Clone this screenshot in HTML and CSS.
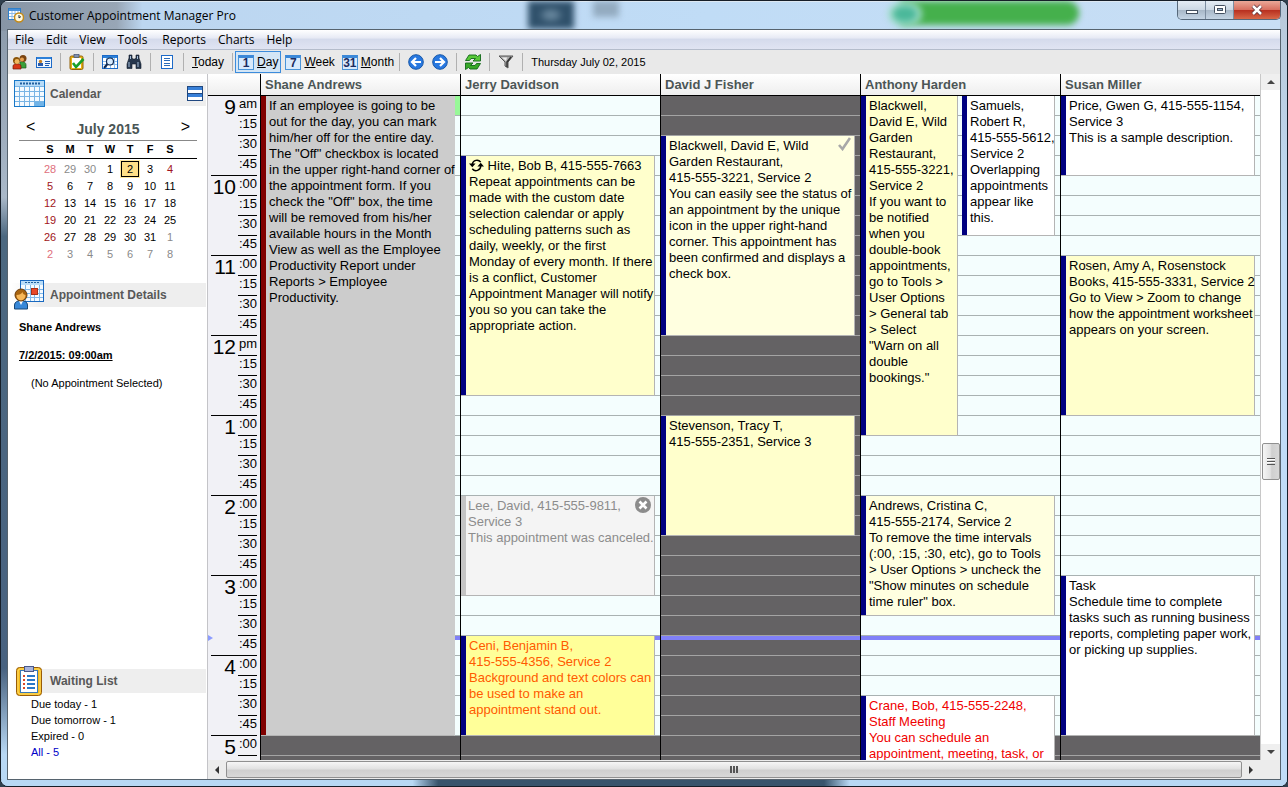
FILE: index.html
```html
<!DOCTYPE html>
<html lang="en">
<head>
  <meta charset="UTF-8" />
  <title>Customer Appointment Manager Pro</title>
  <link rel="stylesheet" href="styles.css">
</head>
<body>
  <div class="window">
    <div class="glass"><i class="blob dark"></i><i class="blob gray"></i><i class="blob green"></i><i class="blob ring"></i></div>

    <header class="titlebar">
      <svg class="app-icon" width="16" height="16" viewBox="0 0 16 16">
        <rect x="0.5" y="1.5" width="12" height="11" fill="#fff" stroke="#2f7fc8"/>
        <path d="M1 3h11M4 4v8M7 4v8M10 4v8M1 6.5h11M1 9.5h11" stroke="#8cbcec" fill="none"/>
        <rect x="1" y="2" width="11" height="2" fill="#4a90d8"/>
        <circle cx="11" cy="10.5" r="4.5" fill="#fff8dc" stroke="#c48a18" stroke-width="1.5"/>
        <path d="M11 8v3l2-1.500" stroke="#234" fill="none"/>
      </svg>
      <span class="title">Customer Appointment Manager Pro</span>
      <div class="controls">
        <button class="ctl" aria-label="Minimize"><svg width="14" height="12" viewBox="0 0 14 12"><rect x="1.500" y="6.500" width="11" height="3" fill="#fff" stroke="#445060"/></svg></button>
        <button class="ctl" aria-label="Maximize"><svg width="12" height="12" viewBox="0 0 12 12"><rect x="0.500" y="1.500" width="11" height="8" rx="1" fill="#fff" stroke="#445060"/><rect x="3.500" y="4.500" width="5" height="2" fill="#9fb8d0" stroke="#445060"/></svg></button>
        <button class="ctl close" aria-label="Close"><svg width="12" height="12" viewBox="0 0 12 12"><path d="M2 2l8 8M10 2l-8 8" stroke="#5a3038" stroke-width="4"/><path d="M2 2l8 8M10 2l-8 8" stroke="#fff" stroke-width="2.500"/></svg></button>
      </div>
    </header>

    <div class="client">
      <nav class="menubar">
        <button>File</button><button>Edit</button><button>View</button><button>Tools</button><button class="wide">Reports</button><button>Charts</button><button>Help</button>
      </nav>

      <div class="toolbar">
        <button aria-label="Customers"><svg width="16" height="16" viewBox="0 0 16 16">
          <path d="M8 8c3-1 6 0 6 3v3H8z" fill="#3aa03a" stroke="#1c5a1c" stroke-width=".7"/>
          <circle cx="11" cy="4.500" r="3.500" fill="#7a4410"/><circle cx="10" cy="5.500" r="2" fill="#e8a050"/>
          <path d="M1 15v-3c0-3 8-3 8 0v3z" fill="#d83818" stroke="#701808" stroke-width=".7"/>
          <circle cx="4.500" cy="6.500" r="3.500" fill="#8a5408"/><circle cx="5" cy="7.500" r="2.400" fill="#f0b860"/>
        </svg></button>
        <button aria-label="Contact card"><svg width="16" height="16" viewBox="0 0 16 16">
          <rect x="0.500" y="3.500" width="15" height="10" fill="#eef6ff" stroke="#1c6ac8"/><rect x="1" y="3" width="14" height="2" fill="#2c80d8"/>
          <circle cx="4.500" cy="7.500" r="1.700" fill="#c88020"/><rect x="2" y="9" width="5" height="3" fill="#2858a8"/>
          <path d="M9 7.500h5M9 9.500h5M9 11.500h4" stroke="#1c5ab0"/>
        </svg></button>
        <span class="sep"></span>
        <button aria-label="Waiting list"><svg width="16" height="16" viewBox="0 0 16 16">
          <rect x="1" y="2" width="13" height="13.500" rx="1.500" fill="#e8b010" stroke="#906008"/>
          <rect x="3" y="4" width="9" height="10" fill="#fff"/><rect x="5" y="0.500" width="5" height="3" fill="#8090b0" stroke="#405070" stroke-width=".7"/>
          <path d="M4 9l3 4 7.500-8" fill="none" stroke="#18a028" stroke-width="2.600"/>
        </svg></button>
        <span class="sep"></span>
        <button aria-label="Find appointment"><svg width="16" height="16" viewBox="0 0 16 16">
          <rect x="0.500" y="1.500" width="15" height="13" fill="#fff" stroke="#1c6ac8"/><rect x="1" y="2" width="14" height="2" fill="#2c80d8"/>
          <path d="M1 7.500h14M1 10.500h14M4.500 4v10M8.500 4v10M12.500 4v10" stroke="#90c0f0"/>
          <path d="M5.500 10L2 14" stroke="#102850" stroke-width="2"/><circle cx="8" cy="7.500" r="3.500" fill="#d8ecff" stroke="#102850" stroke-width="1.200"/>
        </svg></button>
        <button aria-label="Search"><svg width="16" height="16" viewBox="0 0 16 16">
          <path d="M3 1h3v3l1 1h2l1-1V1h3v3l2 6v4.500h-5V10H6v4.500H1V10l2-6z" fill="#26364c" stroke="#101c2c" stroke-width=".6"/>
          <path d="M3 8v5M12 8v5M4.500 2v3M11.500 2v3" stroke="#a8c0dc"/>
        </svg></button>
        <span class="sep"></span>
        <button aria-label="List"><svg width="16" height="16" viewBox="0 0 16 16">
          <rect x="2.500" y="1.500" width="11" height="13" fill="#fff" stroke="#1c6ac8"/><path d="M5 4.500h6M5 6.500h6M5 9.500h6M5 11.500h6" stroke="#2c6cb8"/>
        </svg></button>
        <span class="sep"></span>
        <button class="today-btn"><u>T</u>oday</button>
        <span class="sep"></span>
        <div class="views">
          <button class="view active"><span class="num">1</span><span><u>D</u>ay</span></button>
          <button class="view"><span class="num">7</span><span><u>W</u>eek</span></button>
          <button class="view"><span class="num">31</span><span><u>M</u>onth</span></button>
        </div>
        <span class="sep"></span>
        <button aria-label="Previous"><svg width="16" height="16" viewBox="0 0 16 16"><circle cx="8" cy="8" r="7.300" fill="#2878e0" stroke="#1858a8"/><path d="M13 8H4M8 4L4 8l4 4" fill="none" stroke="#fff" stroke-width="2.200"/></svg></button>
        <button aria-label="Next"><svg width="16" height="16" viewBox="0 0 16 16"><circle cx="8" cy="8" r="7.300" fill="#2878e0" stroke="#1858a8"/><path d="M3 8h9M8 4l4 4-4 4" fill="none" stroke="#fff" stroke-width="2.200"/></svg></button>
        <span class="sep"></span>
        <button aria-label="Refresh"><svg width="16" height="16" viewBox="0 0 16 16">
          <path d="M0.500 6.500L4 1h7l1.500 1.500L15.500 0.500V7H8l2.500-2.500H6L4.500 6.500z" fill="#58c838" stroke="#106818" stroke-width=".9"/>
          <path d="M15.500 9.500L12 15H5l-1.500-1.500L0.500 15.500V9H8l-2.500 2.500H10l1.500-2z" fill="#38a828" stroke="#106818" stroke-width=".9"/>
        </svg></button>
        <span class="sep"></span>
        <button aria-label="Filter"><svg width="16" height="16" viewBox="0 0 16 16"><path d="M1 2h14L10 8v6l-3-2V8z" fill="#aaa" stroke="#555"/><path d="M4 3.500h5L8 7z" fill="#eee"/><path d="M13 3L9 8v5" stroke="#333" stroke-width="1.500" fill="none"/></svg></button>
        <span class="sep"></span>
        <span class="date">Thursday July 02, 2015</span>
      </div>

      <div class="content">
        <aside class="sidebar">
          <section>
            <h2 class="band">
              <svg width="32" height="28" viewBox="0 0 32 28">
                <rect x="0.500" y="0.500" width="30" height="26" fill="#f4faff" stroke="#1878c8"/><rect x="1" y="1" width="29" height="5" fill="#b8dcf8"/>
                <path d="M6 3.500h20" stroke="#2060a0" stroke-width="2" stroke-dasharray="2 1"/>
                <rect x="21" y="21" width="9" height="5" fill="#70b4e8"/>
                <path d="M1 6.500h29M1 11.500h29M1 16.500h29M1 21.500h29M5.500 7v19M10.500 7v19M15.500 7v19M20.500 7v19M25.500 7v19" stroke="#78b4e4"/>
              </svg>
              Calendar
              <button class="collapse" aria-label="Collapse"><svg width="16" height="16" viewBox="0 0 16 16"><rect x="0.500" y="0.500" width="15" height="7" fill="#fff" stroke="#204880"/><rect x="0.500" y="7.500" width="15" height="7" fill="#fff" stroke="#204880"/><path d="M1 2.500h14M1 9.500h14" stroke="#3880d8" stroke-width="3"/></svg></button>
            </h2>
            <div class="month"><button>&lt;</button><strong>July 2015</strong><button>&gt;</button></div>
            <table class="cal">
              <thead><tr><th>S</th><th>M</th><th>T</th><th>W</th><th>T</th><th>F</th><th>S</th></tr></thead>
              <tbody>
                <tr><td class="other sun">28</td><td class="other">29</td><td class="other">30</td><td>1</td><td><span class="picked">2</span></td><td>3</td><td class="sun">4</td></tr>
                <tr><td class="sun">5</td><td>6</td><td>7</td><td>8</td><td>9</td><td>10</td><td>11</td></tr>
                <tr><td class="sun">12</td><td>13</td><td>14</td><td>15</td><td>16</td><td>17</td><td>18</td></tr>
                <tr><td class="sun">19</td><td>20</td><td>21</td><td>22</td><td>23</td><td>24</td><td>25</td></tr>
                <tr><td class="sun">26</td><td>27</td><td>28</td><td>29</td><td>30</td><td>31</td><td class="other">1</td></tr>
                <tr><td class="other sun">2</td><td class="other">3</td><td class="other">4</td><td class="other">5</td><td class="other">6</td><td class="other">7</td><td class="other">8</td></tr>
              </tbody>
            </table>
          </section>

          <section class="details">
            <h2 class="band">
              <svg width="32" height="30" viewBox="0 0 32 30">
                <rect x="6.500" y="0.500" width="23" height="21" fill="#f4faff" stroke="#1868c0"/><rect x="7" y="1" width="22" height="4" fill="#b8dcf8"/>
                <path d="M11 2.500h15" stroke="#2060a0" stroke-dasharray="2 1"/>
                <path d="M7 9.500h22M7 13.500h22M7 17.500h22M11.500 5v16M16.500 5v16M20.500 5v16M25.500 5v16" stroke="#80b8e8"/>
                <rect x="17.500" y="8.500" width="6" height="6" fill="#e84828" stroke="#a83018"/>
                <path d="M0.500 29v-4c0-6 13-6 13 0v4z" fill="#3888d8" stroke="#184878"/>
                <path d="M5 21l2 4 2-4z" fill="#fff"/>
                <circle cx="7" cy="15" r="6" fill="#a86410" stroke="#6c3c08"/><path d="M2.500 15c3 0 5-1 6-3 0 2 2 3 3 3 0 7-9 7-9 0z" fill="#f8b858"/>
              </svg>
              Appointment Details
            </h2>
            <p><b>Shane Andrews</b></p>
            <p><b><u>7/2/2015: 09:00am</u></b></p>
            <p class="none">(No Appointment Selected)</p>
          </section>

          <section class="waiting">
            <h2 class="band">
              <svg width="32" height="30" viewBox="0 0 32 30">
                <rect x="2.500" y="1.500" width="25" height="28" rx="3" fill="#f4b818" stroke="#985c08"/><rect x="4" y="3" width="22" height="25" rx="2" fill="none" stroke="#ffe070"/>
                <rect x="6.500" y="4.500" width="17" height="22" fill="#fff" stroke="#3878b8"/>
                <rect x="10.500" y="0.500" width="9" height="5" fill="#a8b4dc" stroke="#485888"/>
                <path d="M13 10h8M13 14h8M13 18h8M13 22h8" stroke="#2878c8" stroke-width="2"/>
                <path d="M9 10h2M9 14h2M9 18h2M9 22h2" stroke="#d84828" stroke-width="2"/>
              </svg>
              Waiting List
            </h2>
            <ul><li>Due today - 1</li><li>Due tomorrow - 1</li><li>Expired - 0</li><li><a href="#">All - 5</a></li></ul>
          </section>
        </aside>

        <main class="scheduler">
          <div class="heads">
            <span class="corner"></span>
            <h3>Shane Andrews</h3><h3>Jerry Davidson</h3><h3>David J Fisher</h3><h3>Anthony Harden</h3><h3>Susan Miller</h3>
          </div>

          <div class="sheet">
            <div class="ruler">
              <i class="now-mark"></i>
              <div class="hour"><b>9</b><ol><li>am</li><li>:15</li><li>:30</li><li>:45</li></ol></div>
              <div class="hour"><b>10</b><ol><li>:00</li><li>:15</li><li>:30</li><li>:45</li></ol></div>
              <div class="hour"><b>11</b><ol><li>:00</li><li>:15</li><li>:30</li><li>:45</li></ol></div>
              <div class="hour"><b>12</b><ol><li>pm</li><li>:15</li><li>:30</li><li>:45</li></ol></div>
              <div class="hour"><b>1</b><ol><li>:00</li><li>:15</li><li>:30</li><li>:45</li></ol></div>
              <div class="hour"><b>2</b><ol><li>:00</li><li>:15</li><li>:30</li><li>:45</li></ol></div>
              <div class="hour"><b>3</b><ol><li>:00</li><li>:15</li><li>:30</li><li>:45</li></ol></div>
              <div class="hour"><b>4</b><ol><li>:00</li><li>:15</li><li>:30</li><li>:45</li></ol></div>
              <div class="hour"><b>5</b><ol><li>:00</li><li></li></ol></div>
            </div>

            <!-- one grid row = 15 minutes, row 1 = 9:00am -->
            <div class="day">
              <div class="free"></div>
              <div class="off" style="grid-row: 33 / span 2"></div>
              <div class="now"></div>
              <article class="appt dayoff" style="grid-row: 1 / span 32">If an employee is going to be<br>out for the day, you can mark<br>him/her off for the entire day.<br>The "Off" checkbox is located<br>in the upper right-hand corner of<br>the appointment form. If you<br>check the "Off" box, the time<br>will be removed from his/her<br>available hours in the Month<br>View as well as the Employee<br>Productivity Report under<br>Reports &gt; Employee<br>Productivity.</article>
            </div>

            <div class="day">
              <div class="off" style="grid-row: 33 / span 2"></div>
              <div class="now"></div>
              <article class="appt yellow" style="grid-row: 4 / span 12"><svg class="repeat" width="15" height="14" viewBox="0 0 16 14"><path d="M3.500 6a5 5 0 0 1 9-2M12.500 8a5 5 0 0 1-9 3" fill="none" stroke="#000" stroke-width="1.500"/><path d="M0 5.500h7L3.500 9.500zM9 8.500h7L12.500 4.500z"/></svg> Hite, Bob B, 415-555-7663<br>Repeat appointments can be<br>made with the custom date<br>selection calendar or apply<br>scheduling patterns such as<br>daily, weekly, or the first<br>Monday of every month. If there<br>is a conflict, Customer<br>Appointment Manager will notify<br>you so you can take the<br>appropriate action.</article>
              <article class="appt canceled" style="grid-row: 21 / span 5">Lee, David, 415-555-9811,<br>Service 3<br>This appointment was canceled.<svg class="status" width="16" height="16" viewBox="0 0 16 16"><circle cx="8" cy="8" r="8" fill="#8c8c8c"/><path d="M4.500 4.500l7 7M11.500 4.500l-7 7" stroke="#fff" stroke-width="2.600"/></svg></article>
              <article class="appt bright" style="grid-row: 28 / span 5">Ceni, Benjamin B,<br>415-555-4356, Service 2<br>Background and text colors can<br>be used to make an<br>appointment stand out.</article>
            </div>

            <div class="day">
              <div class="off" style="grid-row: 1 / span 34"></div>
              <div class="now"></div>
              <article class="appt pale" style="grid-row: 3 / span 10">Blackwell, David E, Wild<br>Garden Restaurant,<br>415-555-3221, Service 2<br>You can easily see the status of<br>an appointment by the unique<br>icon in the upper right-hand<br>corner. This appointment has<br>been confirmed and displays a<br>check box.<svg class="status check" width="14" height="14" viewBox="0 0 14 14"><path d="M2 8l3.500 4L13 1" fill="none" stroke="#a8a8a8" stroke-width="2.600"/></svg></article>
              <article class="appt yellow" style="grid-row: 17 / span 6">Stevenson, Tracy T,<br>415-555-2351, Service 3</article>
            </div>

            <div class="day split">
              <div class="off" style="grid-row: 33 / span 2"></div>
              <div class="now"></div>
              <article class="appt yellow half" style="grid-row: 1 / span 17">Blackwell,<br>David E, Wild<br>Garden<br>Restaurant,<br>415-555-3221,<br>Service 2<br>If you want to<br>be notified<br>when you<br>double-book<br>appointments,<br>go to Tools &gt;<br>User Options<br>&gt; General tab<br>&gt; Select<br>"Warn on all<br>double<br>bookings."</article>
              <article class="appt second" style="grid-row: 1 / span 7">Samuels,<br>Robert R,<br>415-555-5612,<br>Service 2<br>Overlapping<br>appointments<br>appear like<br>this.</article>
              <article class="appt pale" style="grid-row: 21 / span 6">Andrews, Cristina C,<br>415-555-2174, Service 2<br>To remove the time intervals<br>(:00, :15, :30, etc), go to Tools<br>&gt; User Options &gt; uncheck the<br>"Show minutes on schedule<br>time ruler" box.</article>
              <article class="appt red" style="grid-row: 31 / span 4">Crane, Bob, 415-555-2248,<br>Staff Meeting<br>You can schedule an<br>appointment, meeting, task, or</article>
            </div>

            <div class="day">
              <div class="off" style="grid-row: 33 / span 2"></div>
              <div class="now"></div>
              <article class="appt" style="grid-row: 1 / span 4">Price, Gwen G, 415-555-1154,<br>Service 3<br>This is a sample description.</article>
              <article class="appt yellow" style="grid-row: 9 / span 8">Rosen, Amy A, Rosenstock<br>Books, 415-555-3331, Service 2<br>Go to View &gt; Zoom to change<br>how the appointment worksheet<br>appears on your screen.</article>
              <article class="appt" style="grid-row: 25 / span 8">Task<br>Schedule time to complete<br>tasks such as running business<br>reports, completing paper work,<br>or picking up supplies.</article>
            </div>
          </div>

          <div class="vscroll">
            <button aria-label="Scroll up"><svg width="8" height="4" viewBox="0 0 8 4"><path d="M0 4l4-4 4 4z" fill="#444"/></svg></button>
            <div class="track"><div class="thumb"><i></i></div></div>
            <button aria-label="Scroll down"><svg width="8" height="4" viewBox="0 0 8 4"><path d="M0 0l4 4 4-4z" fill="#444"/></svg></button>
          </div>
          <div class="hscroll">
            <button aria-label="Scroll left"><svg width="4" height="8" viewBox="0 0 4 8"><path d="M4 0L0 4l4 4z" fill="#333"/></svg></button>
            <div class="thumb"><i></i></div>
            <button aria-label="Scroll right"><svg width="4" height="8" viewBox="0 0 4 8"><path d="M0 0l4 4-4 4z" fill="#333"/></svg></button>
          </div>
        </main>
      </div>
    </div>
  </div>
</body>
</html>
```
FILE: styles.css
```css
* {
  box-sizing: border-box;
}
body {
  margin: 0;
  background: #30404e;
  font-family: "Liberation Sans", Arial, sans-serif;
  font-size: 11px;
  color: #000;
}
button {
  border: none;
  background: none;
  padding: 0;
  font: inherit;
  color: inherit;
}
svg {
  display: block;
}
h2, h3, p, ul, ol {
  margin: 0;
  padding: 0;
  list-style: none;
}

/* window frame */
.window {
  position: relative;
  display: flex;
  flex-direction: column;
  height: 100vh;
  padding: 0 6px 6px;
  border: 1px solid #161e28;
  border-radius: 8px;
  background: linear-gradient(#8897a8, #a9b8c8 25%, #4c6880 30%, #486280 85%, #b8d8f4 96%);
  overflow: hidden;
}
.glass {
  position: absolute;
  inset: 0;
  background:
    linear-gradient(90deg, #b8d8f4 32%, #38546c 34%, #38546c 64%, #b8d8f4 66%) bottom / 100% 6px no-repeat,
    linear-gradient(#b9c8d8, #c0dcf6 30%) right / 7px 100% no-repeat,
    linear-gradient(90deg, #8795a5, #98a6b6 9%, #bcd6f0 11%, #c0dcf6 55%, #c8def4) top / 100% 30px no-repeat;
  box-shadow: inset 0 1px 0 #dde8f2;
}
.blob {
  position: absolute;
  top: 0;
  filter: blur(3px);
}
.blob.dark {
  left: 41%;
  width: 46px;
  height: 28px;
  background: radial-gradient(#68879e 15%, #2f506a 40%);
}
.blob.gray {
  left: 46%;
  width: 26px;
  height: 16px;
  background: #93abc0;
}
.blob.green {
  left: 70%;
  width: 178px;
  height: 24px;
  border-radius: 0 12px 12px 0;
  background: #45b04c;
}
.blob.ring {
  left: 69%;
  width: 34px;
  height: 26px;
  border: 5px solid #9fdcc8;
  border-radius: 50%;
  background: #4bb89a;
}
.titlebar {
  position: relative;
  display: flex;
  align-items: center;
  height: 28px;
  flex: none;
  font-family: "Open Sans", sans-serif;
  font-size: 12px;
}
.app-icon {
  margin: 0 5px 0 1px;
}
.controls {
  display: flex;
  align-self: flex-start;
  margin-left: auto;
  height: 19px;
  border: 1px solid #56687a;
  border-top: none;
  border-radius: 0 0 5px 5px;
  overflow: hidden;
}
.ctl {
  display: flex;
  justify-content: center;
  align-items: center;
  width: 28px;
  border-right: 1px solid #7c8da0;
  background: linear-gradient(#e4ecf4, #ccd8e4 48%, #a8b8c8 52%, #c4d4e4);
}
.ctl.close {
  width: 46px;
  border-right: none;
  background: linear-gradient(#eaa898, #d87060 48%, #b83020 52%, #d86848);
}
.client {
  position: relative;
  display: flex;
  flex-direction: column;
  flex: 1;
  min-height: 0;
  border: 1px solid #56636e;
  background: #fff;
}

/* menu and toolbar */
.menubar {
  display: flex;
  height: 20px;
  flex: none;
  padding-left: 1px;
  border-bottom: 1px solid #b4bccb;
  background: linear-gradient(#fff, #e8ebf5 40%, #d5dbec 50%, #e0e4f2);
  font-family: "Open Sans", sans-serif;
  font-size: 12px;
}
.menubar button {
  padding: 0 6px;
}
.menubar .wide {
  margin-left: 3px;
}
.toolbar {
  display: flex;
  align-items: center;
  gap: 8px;
  height: 24px;
  flex: none;
  padding-left: 4px;
  background: #e9e9e9;
  font-size: 12px;
}
.sep {
  width: 1px;
  height: 18px;
  background: #b0b0b0;
}
.date {
  font-size: 11px;
}
.views {
  display: flex;
  gap: 1px;
  margin: 0 -6px;
}
.view {
  display: flex;
  align-items: center;
  gap: 3px;
  height: 22px;
  padding: 0 2px;
  border: 1px solid transparent;
}
.view.active {
  border-color: #3c8cdc;
  background: #d4e6f6;
}
.num {
  width: 16px;
  height: 15px;
  border: 1px solid #4a94d8;
  border-top: 3px solid #3c88d8;
  background: #d8eafc;
  color: #1c2c60;
  font-size: 12px;
  font-weight: bold;
  line-height: 11px;
}

/* left panel */
.content {
  display: flex;
  flex: 1;
  min-height: 0;
}
.sidebar {
  display: flex;
  flex-direction: column;
  width: 200px;
  flex: none;
  padding: 8px 1px 19px 3px;
  border-right: 1px solid #c4c4c8;
}
.band {
  display: flex;
  align-items: center;
  gap: 4px;
  height: 24px;
  padding: 0 3px;
  background: linear-gradient(90deg, #fff, #eee 15%);
  color: #585858;
  font-size: 12px;
}
.collapse {
  margin-left: auto;
}
.month {
  display: flex;
  justify-content: space-between;
  align-items: center;
  height: 24px;
  margin: 11px 9px 0 8px;
  padding: 0 7px;
  border-bottom: 1px solid #888;
  color: #4a5656;
  font-size: 14px;
}
.month button {
  padding-bottom: 4px;
  color: #000;
  font-size: 16px;
}
.cal {
  width: 178px;
  margin-left: 8px;
  border-collapse: collapse;
  table-layout: fixed;
  text-align: center;
}
.cal th, .cal td {
  width: 20px;
  height: 17px;
  padding: 0;
}
.cal th:first-child, .cal td:first-child {
  width: 41px;
  padding-left: 21px;
}
.cal th:last-child, .cal td:last-child {
  width: 37px;
  padding-right: 17px;
}
.cal thead {
  border-bottom: 1px solid #000;
}
.cal tbody::before {
  content: "";
  display: block;
  height: 2px;
}
.cal .other {
  color: #8a8a8a;
}
.cal .sun {
  color: #a01420;
}
.cal .other.sun {
  color: #e0707c;
}
.picked {
  display: block;
  margin: 0 1px;
  border: 1px solid #000;
  outline: 1px solid #ffe9a0;
  background: #ffe088;
  line-height: 14px;
}
.details {
  margin-top: 20px;
}
.details p {
  margin: 12px 0 0 8px;
  line-height: 16px;
}
.details .none {
  margin-left: 20px;
}
.waiting {
  margin-top: auto;
}
.waiting ul {
  padding: 3px 0 0 20px;
  line-height: 16px;
}
.waiting a {
  color: #0000c8;
  text-decoration: none;
}

/* schedule */
.scheduler {
  display: grid;
  grid-template-columns: 1fr 20px;
  grid-template-rows: 22px 1fr 19px;
  flex: 1;
  min-width: 0;
}
.heads, .sheet {
  display: grid;
  grid-template-columns: 52px repeat(5, 1fr);
}
.heads {
  border-bottom: 1px solid #000;
  background: linear-gradient(#fff, #eee);
}
.heads h3 {
  padding-left: 4px;
  border-left: 1px solid #000;
  color: #4c5656;
  font-size: 13px;
  line-height: 21px;
}
.sheet {
  grid-column: 1;
  min-height: 0;
  overflow: hidden;
}
.ruler {
  position: relative;
  min-height: 0;
  padding: 0 3px;
  background: #f1f1f6;
}
.now-mark {
  position: absolute;
  left: 0;
  top: 539px;
  border: 3px solid transparent;
  border-left: 5px solid #8c9cff;
}
.hour {
  display: flex;
  justify-content: flex-end;
  gap: 2px;
  border-bottom: 1px solid #000;
}
.hour b {
  font-size: 21px;
  font-weight: normal;
  line-height: 22px;
}
.hour ol {
  width: 19px;
  text-align: right;
  font-size: 13px;
}
.hour li {
  height: 20px;
  border-bottom: 1px solid #000;
  line-height: 16px;
}
.hour li:last-child {
  height: 19px;
  border-bottom: none;
}
.day {
  display: grid;
  grid-template-columns: 1fr;
  grid-auto-rows: 20px;
  min-width: 0;
  min-height: 0;
  padding-right: 5px;
  border-left: 1px solid #000;
  background: repeating-linear-gradient(#f4fefe 0 19px, #a9b2b2 19px 20px);
}
.day.split {
  grid-template-columns: 50% 1fr;
  column-gap: 4px;
}
.off, .now, .free {
  grid-column: 1 / -1;
  margin-right: -5px;
}
.off {
  background: repeating-linear-gradient(#646264 0 19px, #a4a4a4 19px 20px);
}
.now {
  grid-row: 28;
  height: 4px;
  background: #8080f8;
}
.free {
  grid-row: 1;
  height: 19px;
  background: #98f898;
}
.appt {
  position: relative;
  grid-column: 1 / -1;
  min-width: 0;
  padding: 2px 0 0 8px;
  border: solid #b4b4b4;
  border-width: 0 1px 1px 0;
  background: #fff;
  box-shadow: inset 5px 0 0 #000080;
  font-size: 13px;
  line-height: 16px;
  white-space: nowrap;
}
.half {
  grid-column: 1;
}
.second {
  grid-column: 2;
}
.yellow {
  background: #ffffcc;
}
.pale {
  background: #ffffe0;
}
.bright {
  background: #ffff99;
  color: #ff5a00;
}
.red {
  color: #f00000;
}
.dayoff {
  border-right-color: #ccc;
  background: #ccc;
  box-shadow: inset 5px 0 0 #800000;
}
.canceled {
  padding-left: 7px;
  background: #f4f4f4;
  box-shadow: inset 5px 0 0 #c4c4c4;
  color: #8c8c8c;
}
.repeat {
  display: inline-block;
  vertical-align: top;
}
.status {
  position: absolute;
  top: 1px;
  right: 3px;
}

/* scrollbars */
.vscroll {
  grid-column: 2;
  grid-row: 1 / 3;
  display: flex;
  flex-direction: column;
  border-left: 1px solid #c8c8c8;
  background: #fff;
}
.vscroll button {
  display: flex;
  justify-content: center;
  align-items: center;
  height: 16px;
  background: #efefef;
}
.track {
  display: flex;
  flex: 1;
  padding: 353px 0 0 1px;
}
.thumb {
  display: flex;
  justify-content: center;
  align-items: center;
  border: 1px solid #909090;
  border-radius: 2px;
  background: linear-gradient(#f6f6f6, #e2e2e2 45%, #cfcfcf 55%, #d8d8d8);
}
.track .thumb {
  width: 18px;
  height: 37px;
  background: linear-gradient(90deg, #f6f6f6, #e2e2e2 45%, #cfcfcf 55%, #d8d8d8);
}
.thumb i {
  width: 8px;
  height: 7px;
  background: repeating-linear-gradient(90deg, #555 0 2px, transparent 2px 3px);
}
.track .thumb i {
  background: repeating-linear-gradient(#555 0 1px, #fff 1px 2px, transparent 2px 3px);
}
.hscroll {
  grid-column: 1 / -1;
  display: flex;
  padding: 1px 20px 1px 0;
  background: #ececec;
}
.hscroll .thumb {
  flex: 1;
}
.hscroll button {
  display: flex;
  justify-content: center;
  align-items: center;
  width: 18px;
}
```
